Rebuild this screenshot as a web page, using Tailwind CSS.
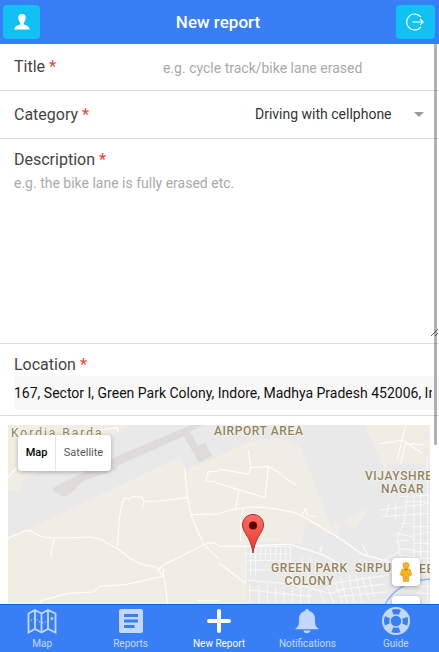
<!DOCTYPE html>
<html lang="en">

<head>
  <meta charset="utf-8" />
  <title>New report</title>
  <meta name="viewport" content="width=device-width, initial-scale=1" />
  <script src="https://cdn.jsdelivr.net/npm/@tailwindcss/browser@4"></script>
</head>

<body class="flex flex-col h-screen overflow-hidden bg-white text-[#444] font-[Roboto,sans-serif]">

  <!-- HEADER -->
  <header class="flex shrink-0 items-center justify-between h-11 pl-[3px] pr-1 bg-[#387ef5]">
    <button aria-label="Profile" class="flex items-center justify-center w-[37px] h-[34px] rounded bg-[#11c1f3]">
      <svg class="w-4 h-4" viewBox="0 0 16 16" fill="#fff">
        <path d="M8 0C5.400 0 4.200 1.600 4.300 4c0 1.700.7 3 1.500 4 .7.9.6 2.200-.3 2.700C3.300 11.500.6 12 .4 15.500h15.200c-.2-3.500-2.900-4-5.100-4.800-.9-.5-1-1.800-.3-2.700.8-1 1.500-2.300 1.500-4C11.800 1.600 10.600 0 8 0z" />
      </svg>
    </button>
    <h1 class="text-[17px] leading-[44px] font-medium text-white">New report</h1>
    <button aria-label="Log out" class="flex items-center justify-center w-[39px] h-[34px] rounded bg-[#11c1f3]">
      <svg class="w-[18px] h-[18px]" viewBox="0 0 18 18" fill="none" stroke="#fff" stroke-width="1.200">
        <path d="M15 4.200A8 8 0 1 0 15 13.800M6.500 9H17M14 6l3 3-3 3" />
      </svg>
    </button>
  </header>

  <!-- FORM -->
  <main class="relative flex-1 min-h-0 overflow-hidden">
    <form>
      <div class="flex h-[47px] border-b border-[#ddd]">
        <label for="title" class="w-[149px] shrink-0 pl-[14px] text-base leading-[46px]">Title <span class="font-medium text-[#ef473a]">*</span></label>
        <input id="title" type="text" placeholder="e.g. cycle track/bike lane erased"
          class="flex-1 min-w-0 ml-[14px] pt-[2px] text-sm text-[#111] placeholder:text-[#aaa] outline-none">
      </div>

      <div class="relative flex h-12 items-center justify-between border-b border-[#ddd]">
        <label for="category" class="pl-[14px] text-base">Category <span class="font-medium text-[#ef473a]">*</span></label>
        <select id="category" class="h-full appearance-none pb-[2px] pr-[47px] text-sm text-[#333] bg-white outline-none">
          <option>Driving with cellphone</option>
        </select>
        <span class="absolute right-[15px] top-[21px] border-x-[5px] border-t-[5px] border-x-transparent border-t-[#999] pointer-events-none"></span>
      </div>

      <div class="flex flex-col h-[205px] pt-[9px] pl-[14px] border-b border-[#ddd]">
        <label for="description" class="text-base">Description <span class="font-medium text-[#ef473a]">*</span></label>
        <textarea id="description" placeholder="e.g. the bike lane is fully erased etc."
          class="h-[165px] w-full pt-px text-sm leading-5 resize placeholder:text-[#aaa] outline-none"></textarea>
      </div>

      <div class="h-[72px] pt-[9px] pl-[14px] border-b border-[#ddd]">
        <label for="location" class="block text-base leading-[23px]">Location <span class="font-medium text-[#ef473a]">*</span></label>
        <div class="h-[34px] rounded-l-sm bg-[#f8f8f8] pr-[7px]">
          <input id="location" type="text" value="167, Sector I, Green Park Colony, Indore, Madhya Pradesh 452006, India"
            class="w-full h-full text-sm text-[#111] outline-none">
        </div>
      </div>
    </form>

    <!-- MAP -->
    <section aria-label="Location map" class="relative mt-[9px] ml-2 mr-[9px] h-[300px] overflow-hidden bg-[#e9e9e9]">
      <svg class="absolute inset-0 w-full h-full" fill="none">
        <!-- west side, drawn at 3x -->
        <g transform="translate(-8 -5) scale(.33333)">
          <path fill="#efede4" d="M24 15H395L300 62 66 182 66 213H24zM24 352L545 108 556 148 663 108V600H24z" />
          <path fill="#e9e9e9" d="M66 182L395 15H660V108L556 148 545 108 85 328 24 352V213H66z" />
          <path fill="#dddcda" d="M158 204L330 118 515 40 575 15H607L570 36 592 76 616 70 637 107 597 128 552 49 355 136Q352 154 335 152L250 183 215 218 190 230 180 215 165 217z" />
          <path fill="#e3dcd3" d="M163 216l20-6 12 9 20-3-22 14z" />
          <g stroke="#fdfdfb" stroke-width="3.500" stroke-linejoin="round">
            <path d="M24 354L78 331Q92 330 106 341T162 354Q210 354 270 351 300 354 320 370L356 387Q390 420 428 434L468 441 492 472 498 510 503 556M162 355L151 413M352 380L359 286 371 235 388 236 398 229 426 232 432 244 427 265M432 244L480 243 563 232M554 145L562 232 573 284 611 374 663 422M573 284L663 282M476 452Q482 435 510 425L611 374 635 367 663 379M490 445V468L430 482 375 494 300 499 280 516 200 521 121 543V556M24 174L50 142M592 542H663M660 153L625 155 618 183 640 184 663 194M300 30L352 22 355 38" />
          </g>
        </g>
        <!-- east side, drawn at 3x -->
        <g transform="translate(211 -5) scale(.33333)">
          <path fill="#efede4" d="M0 108Q90 60 150 53 225 58 248 90L335 317 362 306 356 350 258 304 248 375 85 362 77 430 85 490V600H0zM437 15H640V136L545 130 510 132 498 152zM370 307L450 264 407 328z" />
          <g stroke="#fdfdfb" stroke-width="3.500" stroke-linejoin="round">
            <path d="M0 148L90 162 95 140 88 91M93 143L148 139Q160 148 180 157L205 179 230 194M0 191L138 233 148 139M60 209L50 266M0 280Q70 260 110 261T225 277Q262 290 310 325L365 357 430 403 550 436M65 363V290L75 265M0 379H65L170 374 215 374 309 403 380 442M0 429L80 490M246 292L260 265 265 285 292 291M303 398L310 377M445 405L431 374M535 118L560 15M480 72L550 60 610 100M545 130L560 70 620 75" />
          </g>
          <g stroke="#f8f8f8" stroke-width="3">
            <path d="M80 380H215V490M80 380V490M95 375V470M110 382V465M125 382V420M140 382V420M155 382V420M170 382V420M185 382V430M200 382V440M75 402H215M82 421H215M85 450H155M85 480L240 495 330 520 380 510M90 510L280 530M92 490V550M120 495V550M145 495V550M170 500V550M195 500V550M220 500V550M245 500V550M270 505V550M300 510L320 550M325 500L345 550M350 490L370 550M250 410V430M275 415V432M365 470L385 550M390 465L405 550M410 465L430 550M430 470L450 540M450 470L465 530M340 490L510 465M350 510L500 492M360 530L505 515" />
            <path d="M485 270L633 250M490 290L633 280M540 230L640 225M565 225L555 310 535 350 545 420M585 220V430M605 215V440M625 110V550M530 340L580 350M530 365L570 360M535 385L590 390M545 405L590 412M575 320H633M580 345L640 335M585 370H633M585 395H633M585 415H633M510 250L500 290M530 250V300M470 435L540 395M555 245H620M545 310H570M600 500H640M590 520H640" />
          </g>
          <path stroke="#8ab8f5" stroke-width="4" d="M497 556Q525 500 590 486 610 476 640 478" />
        </g>
      </svg>

      <!-- PLACE NAMES -->
      <div class="absolute inset-0 text-xs leading-[13px] text-center text-[#93825a] whitespace-nowrap [text-shadow:0_0_2px_#fff,0_0_2px_#fff]">
        <span class="absolute left-[3px] top-[2px] tracking-[2px]">Kordia Barda</span>
        <span class="absolute left-[206px] top-0 tracking-wider font-medium">AIRPORT AREA</span>
        <span class="absolute left-[357px] top-[45px] tracking-wider font-medium">VIJAYSHREE<br>NAGAR</span>
        <span class="absolute left-[263px] top-[137px] tracking-wider font-medium">GREEN PARK<br>COLONY</span>
        <span class="absolute left-[347px] top-[137px] tracking-wider font-medium">SIRPU</span>
        <span class="absolute left-[411px] top-[138px] tracking-wider font-medium">EE</span>
      </div>

      <!-- MARKER -->
      <svg class="absolute left-[233px] top-[88px] w-6 h-[42px]" viewBox="0 0 24 42">
        <defs>
          <linearGradient id="pin" x1="0" y1="0" x2="0" y2="1">
            <stop offset="0" stop-color="#fb7064" />
            <stop offset="1" stop-color="#e8332b" />
          </linearGradient>
        </defs>
        <path fill="url(#pin)" stroke="#b1342d" d="M12 1.500C6 1.500 1.500 6.200 1.500 12c0 5 3.500 8.500 6 13.500 2.500 5 3.800 9.500 4.500 14.500.7-5 2-9.500 4.500-14.500 2.500-5 6-8.500 6-13.500C22.500 6.200 18 1.500 12 1.500z" />
        <circle cx="12" cy="12.500" r="4" fill="#590000" />
      </svg>

      <!-- MAP CONTROLS -->
      <div class="absolute left-[10px] top-[10px] flex h-9 rounded-sm bg-white text-[11px] shadow-[0_1px_4px_rgba(0,0,0,0.3)]">
        <button class="w-[37px] font-medium text-black">Map</button>
        <button class="w-14 border-l border-[#e6e6e6] text-[#565656]">Satellite</button>
      </div>
      <button aria-label="Street View" class="absolute right-[10px] top-[133px] flex items-center justify-center w-7 h-7 rounded-sm bg-white shadow-[0_1px_4px_rgba(0,0,0,0.3)]">
        <svg class="w-3 h-5" viewBox="0 0 12 20" fill="#fbb917" stroke="#d5921b" stroke-width=".7">
          <path d="M3 7h6q1.300 0 1.600 1.500l.9 4.500-1.500.8-.8-2-.6 7.700H6.500L6 14l-.5 5.500H3.400l-.6-7.700-.8 2-1.500-.8.9-4.500Q1.700 7 3 7z" />
          <circle cx="6" cy="3.500" r="3" />
          <path fill="#e8702a" d="M4 7l2 2 2-2z" />
        </svg>
      </button>
      <button aria-label="Zoom in" class="absolute right-[10px] top-[171px] w-7 h-14 rounded-sm bg-white shadow-[0_1px_4px_rgba(0,0,0,0.3)]"></button>
    </section>

    <!-- scroll indicator -->
    <div class="absolute right-[2px] top-0 w-[3px] h-[401px] rounded-b-sm bg-black/30 pointer-events-none"></div>
  </main>

  <!-- TABS -->
  <nav class="shrink-0 h-12 border-t border-[#0c60ee] bg-[#387ef5] overflow-hidden">
    <div class="flex -ml-0.5 -mr-px h-full text-[10px] leading-3 text-white">
      <a href="#map" class="flex flex-1 flex-col items-center opacity-70">
        <svg class="w-8 h-8" viewBox="0 0 32 32" fill="none" stroke="#fff" stroke-width="1.800">
          <path d="M2.500 8.500L9 5l6.500 3.500L22 5l7.500 3.500v19L22 24l-6.500 3.500L9 24l-6.500 3.500zM9 5v19M15.500 8.500v19M22 5v19" />
          <path stroke-width="1.200" stroke-dasharray="1.200 2" d="M5 15.500l4-2 5 3.500 4 1 5-3 2-1" />
          <path stroke-width="1.200" d="M25 12.500l2 2m0-2l-2 2" />
        </svg>
        <span class="pt-px">Map</span>
      </a>
      <a href="#reports" class="flex flex-1 flex-col items-center opacity-70">
        <svg class="w-8 h-8" viewBox="0 0 32 32" fill="#fff">
          <path fill-rule="evenodd" d="M6 4h20q2 0 2 2v20q0 2-2 2H6q-2 0-2-2V6q0-2 2-2zM9 9v3h14V9zM9 14.500v3h14v-3zM9 20v3h10.500v-3z" />
        </svg>
        <span class="pt-px">Reports</span>
      </a>
      <a href="#new" class="flex flex-1 flex-col items-center">
        <svg class="w-8 h-8" viewBox="0 0 32 32" stroke="#fff" stroke-width="4" stroke-linecap="round">
          <path d="M16 6v20M6 16h20" />
        </svg>
        <span class="pt-px">New Report</span>
      </a>
      <a href="#notifications" class="flex flex-1 flex-col items-center opacity-70">
        <svg class="w-8 h-8" viewBox="0 0 32 32" fill="#fff">
          <path d="M16 4c-1.300 0-2 .8-2 2-4.200 1.200-6 4.300-6 8 0 5.500-.3 7.500-3.500 9.500v.700h23v-.700c-3.200-2-3.500-4-3.500-9.500 0-3.700-1.800-6.800-6-8 0-1.200-.7-2-2-2zM12.500 25.500h7c-.3 1.800-1.700 2.800-3.500 2.800s-3.200-1-3.500-2.800z" />
        </svg>
        <span class="pt-px">Notifications</span>
      </a>
      <a href="#guide" class="flex flex-1 flex-col items-center opacity-70">
        <svg class="w-8 h-8" viewBox="0 0 32 32" fill="none" stroke="#fff">
          <circle cx="16" cy="16" r="13" stroke-width="2" />
          <circle cx="16" cy="16" r="6" stroke-width="1.500" />
          <!-- four bands of the lifebuoy -->
          <circle cx="16" cy="16" r="9.500" stroke-width="7" stroke-dasharray="7.460" transform="rotate(22.500 16 16)" />
        </svg>
        <span class="pt-px">Guide</span>
      </a>
    </div>
  </nav>

</body>

</html>
